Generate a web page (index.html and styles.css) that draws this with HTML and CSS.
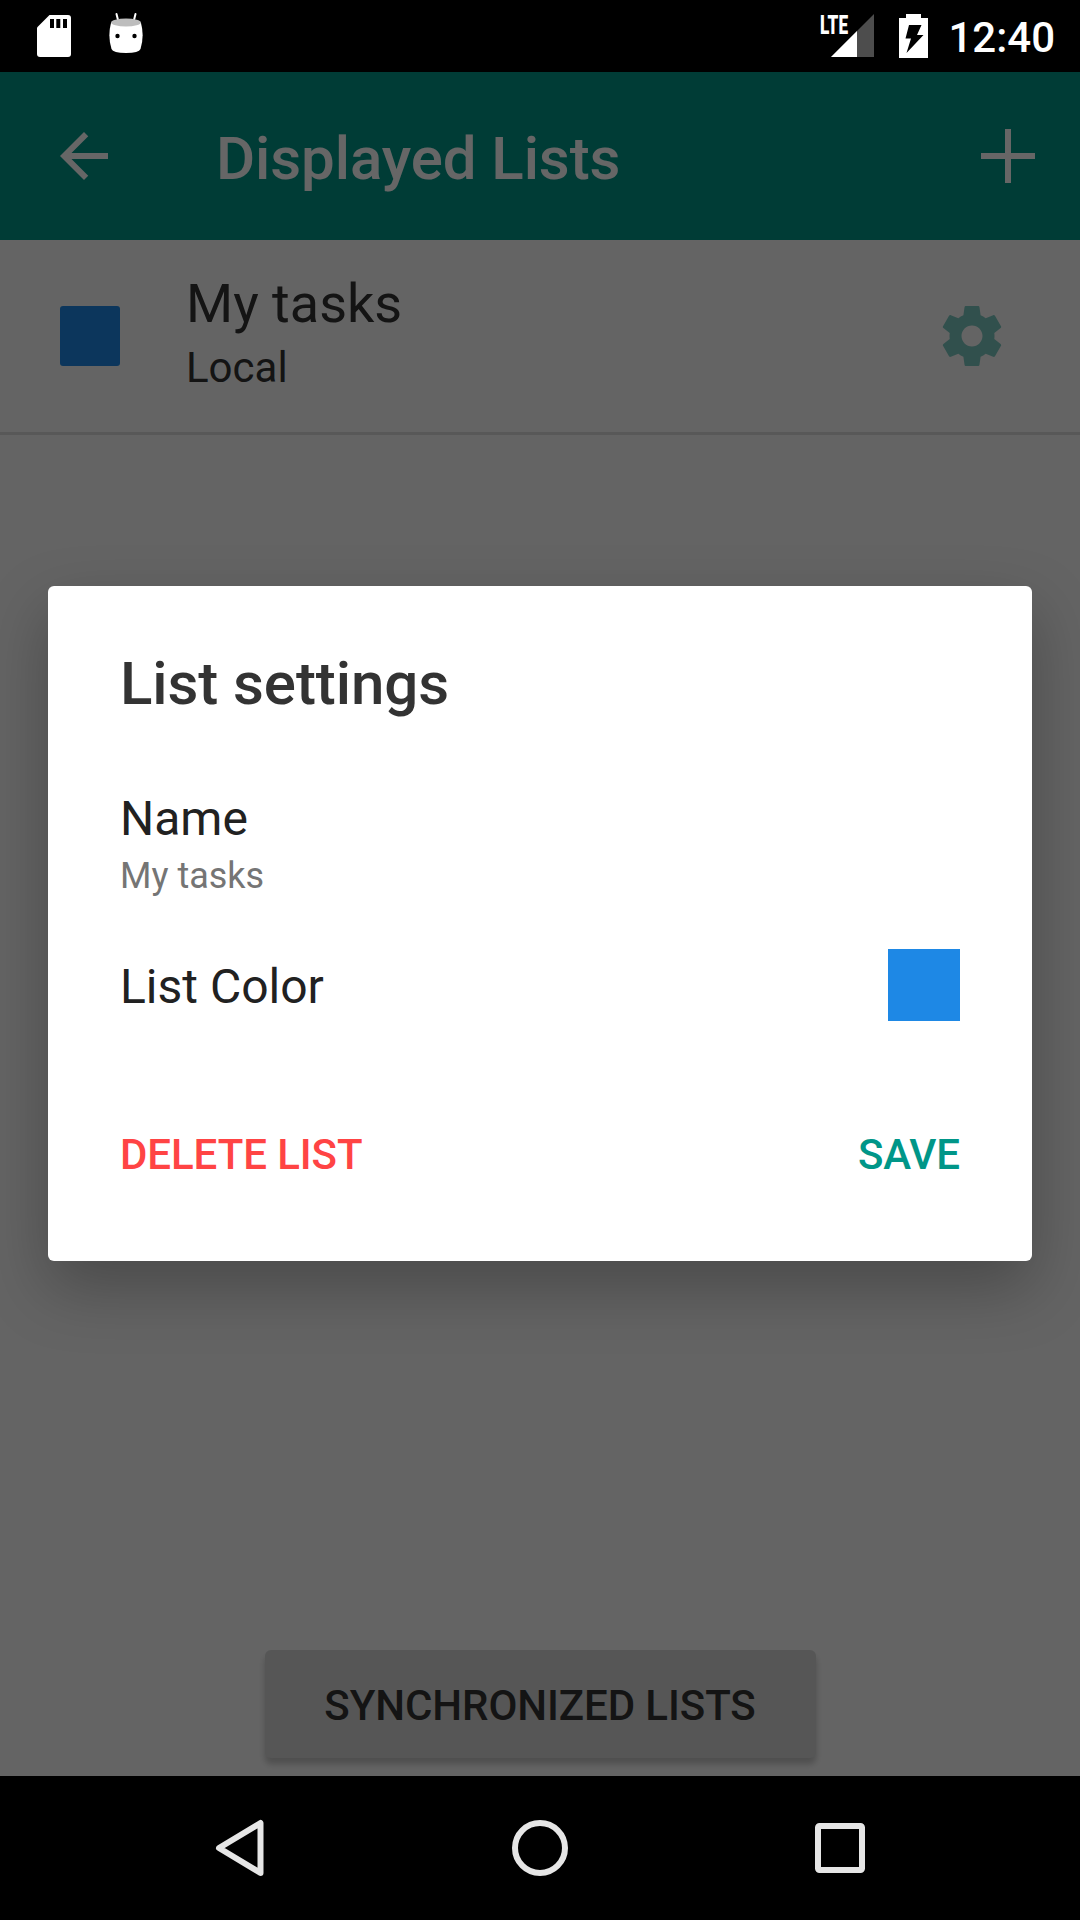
FILE: index.html
```html
<!DOCTYPE html>
<html lang="en">
<head>
<meta charset="utf-8">
<title>Displayed Lists</title>
<link rel="stylesheet" href="styles.css">
</head>
<body>
<div class="screen">
  <header class="status-bar">
    <div class="status-left">
      <svg width="34" height="42" viewBox="0 0 34 42">
        <path fill="#fff" d="M12.500 0H31a3 3 0 0 1 3 3V39a3 3 0 0 1-3 3H3a3 3 0 0 1-3-3V12.500z"/>
        <path fill="#000" d="M13 4h4v9h-4zM19.300 4h4v9h-4zM26 4h4v9h-4z"/>
      </svg>
      <svg width="34" height="42" viewBox="0 0 34 42">
        <path stroke="#fff" stroke-width="2" stroke-linecap="round" d="M7.500 2l2 8M26.500 2l-2 8"/>
        <path fill="#fff" d="M2 11Q17 6 32 11Q35.500 24 31.500 37Q30 41 17 41Q4 41 2.500 37Q-1.500 24 2 11z"/>
        <ellipse fill="#bdbdbd" cx="17" cy="10.500" rx="15" ry="4"/>
        <circle cx="8.500" cy="24" r="2.200"/><circle cx="25.500" cy="24" r="2.200"/>
      </svg>
    </div>
    <div class="status-right">
      <svg class="signal" width="62" height="58" viewBox="-8 -14 62 58">
        <path fill="#4d4d4d" d="M11 43L54 43V0z"/>
        <path fill="#fff" d="M11 43H37V17z"/>
        <text class="lte" x="0" y="19.500" textLength="28" lengthAdjust="spacingAndGlyphs">LTE</text>
      </svg>
      <svg class="battery" width="29" height="44" viewBox="0 0 29 44">
        <path fill="#fff" d="M7 0H22V4H29V44H0V4H7z"/>
        <path fill="#000" d="M10 11H22.500L18 21H24.500L7.500 39L12 24.500H6.500z"/>
      </svg>
      <span class="clock">12:40</span>
    </div>
  </header>

  <main class="app">
    <div class="app-bar">
      <svg width="72" height="72" viewBox="0 0 24 24"><path fill="#fff" d="M20 11H7.830l5.590-5.590L12 4l-8 8 8 8 1.410-1.410L7.830 13H20v-2z"/></svg>
      <h1 class="app-title">Displayed Lists</h1>
      <svg width="54" height="54" viewBox="0 0 54 54"><path fill="#fff" d="M24 0h6v24h24v6H30v24h-6V30H0v-6h24z"/></svg>
    </div>
    <div class="list-row">
      <span class="list-swatch"></span>
      <div class="list-text">
        <span class="list-name">My tasks</span>
        <span class="list-account">Local</span>
      </div>
      <svg class="gear" width="72" height="72" viewBox="0 0 24 24"><path fill="#009688" d="M19.430 12.980c.04-.32.07-.64.07-.98s-.03-.66-.07-.98l2.110-1.650c.19-.15.24-.42.12-.64l-2-3.460c-.12-.22-.39-.3-.61-.22l-2.490 1c-.52-.4-1.080-.73-1.690-.98l-.38-2.650C14.460 2.180 14.250 2 14 2h-4c-.25 0-.46.18-.49.42l-.38 2.650c-.61.25-1.170.59-1.690.98l-2.490-1c-.23-.09-.49 0-.61.22l-2 3.460c-.13.22-.07.49.12.64l2.110 1.650c-.04.32-.07.65-.07.98s.03.66.07.98l-2.110 1.650c-.19.15-.24.42-.12.64l2 3.460c.12.22.39.3.61.22l2.490-1c.52.4 1.080.73 1.690.98l.38 2.650c.03.24.24.42.49.42h4c.25 0 .46-.18.49-.42l.38-2.650c.61-.25 1.170-.59 1.690-.98l2.490 1c.23.09.49 0 .61-.22l2-3.460c.12-.22.07-.49-.12-.64l-2.110-1.650zM12 15.500c-1.930 0-3.500-1.570-3.500-3.500s1.570-3.500 3.500-3.500 3.500 1.570 3.500 3.500-1.570 3.500-3.500 3.500z"/></svg>
    </div>
    <button class="sync-button">SYNCHRONIZED LISTS</button>

    <div class="scrim">
      <section class="dialog">
        <h2 class="dialog-title">List settings</h2>
        <div class="setting">
          <span class="setting-label">Name</span>
          <span class="setting-value">My tasks</span>
        </div>
        <div class="setting-color">
          <span class="setting-label">List Color</span>
          <span class="color-swatch"></span>
        </div>
        <div class="dialog-actions">
          <button class="action action-delete">DELETE LIST</button>
          <button class="action action-save">SAVE</button>
        </div>
      </section>
    </div>
  </main>

  <nav class="nav-bar">
    <svg width="60" height="60" viewBox="0 0 60 60"><path d="M9 30L50.500 5V55z"/></svg>
    <svg width="60" height="60" viewBox="0 0 60 60"><circle cx="30" cy="30" r="25"/></svg>
    <svg width="60" height="60" viewBox="0 0 60 60"><rect x="8" y="8" width="44" height="44" rx="1.500"/></svg>
  </nav>
</div>
</body>
</html>
```
FILE: styles.css
```css
* {
  box-sizing: border-box;
}

body {
  margin: 0;
  background: #000;
  font-family: Roboto, "Liberation Sans", sans-serif;
}

h1, h2 {
  margin: 0;
  font-weight: 500;
  letter-spacing: -0.08px;
}

button {
  margin: 0;
  padding: 0;
  border: 0;
  background: none;
  font: 500 42px/50px Roboto, "Liberation Sans", sans-serif;
  letter-spacing: -0.08px;
}

svg {
  display: block;
  flex: none;
}

.screen {
  display: flex;
  flex-direction: column;
  width: 1080px;
  height: 1920px;
  overflow: hidden;
}

/* Status bar */
.status-bar {
  display: flex;
  justify-content: space-between;
  flex: none;
  height: 72px;
  padding: 0 25px 0 37px;
  background: #000;
}

.status-left {
  display: flex;
  gap: 38px;
  padding-top: 15px;
}

.status-left svg + svg {
  margin-top: -3px;
}

.status-right {
  display: flex;
}

.battery {
  margin: 14px 0 0 25px;
}

.lte {
  fill: #fff;
  font-size: 26px;
  font-weight: 900;
}

.clock {
  margin: 14px 0 0 20px;
  color: #fff;
  font-size: 42px;
  font-weight: 500;
  line-height: 48px;
}

/* Page behind the dialog */
.app {
  position: relative;
  display: flex;
  flex: 1;
  flex-direction: column;
  background: #fafafa;
}

.app-bar {
  display: flex;
  align-items: center;
  height: 168px;
  padding: 0 45px 0 48px;
  background: #009688;
}

.app-title {
  flex: 1;
  padding: 5px 0 0 96px;
  color: #fff;
  font-size: 60px;
  line-height: 70px;
}

.list-row {
  display: flex;
  align-items: center;
  height: 195px;
  padding: 0 72px 0 60px;
  border-bottom: 3px solid #dcdcdc;
}

.list-swatch {
  width: 60px;
  height: 60px;
  border-radius: 3px;
  background: #1e88e5;
}

.list-text {
  display: flex;
  flex: 1;
  flex-direction: column;
  padding: 0 0 8px 66px;
  color: #333;
}

.list-name {
  font-size: 54px;
  line-height: 72px;
}

.list-account {
  font-size: 42px;
  line-height: 56px;
}

.gear {
  opacity: 0.5;
}

.sync-button {
  align-self: center;
  width: 551px;
  height: 108px;
  margin: auto 0 18px;
  border-radius: 6px;
  background: #d6d7d7;
  box-shadow: 0 6px 6px rgba(0, 0, 0, 0.22);
  color: #333;
  line-height: 111px;
}

/* Dialog */
.scrim {
  position: absolute;
  inset: 0;
  padding: 514px 48px 0;
  background: rgba(0, 0, 0, 0.6);
}

.dialog {
  padding: 62px 72px 81px;
  border-radius: 6px;
  background: #fff;
  box-shadow: 0 26px 64px rgba(0, 0, 0, 0.27);
}

.dialog-title {
  color: #333;
  font-size: 60px;
  line-height: 71px;
}

.setting {
  display: flex;
  flex-direction: column;
  gap: 8px;
  margin-top: 72px;
}

.setting-label {
  color: #212121;
  font-size: 48px;
  line-height: 56px;
}

.setting-value {
  color: #757575;
  font-size: 36px;
  line-height: 42px;
}

.setting-color {
  display: flex;
  align-items: center;
  justify-content: space-between;
  height: 72px;
  margin-top: 52px;
}

.setting-color .setting-label {
  padding-top: 3px;
}

.color-swatch {
  width: 72px;
  height: 72px;
  background: #1e88e5;
}

.dialog-actions {
  display: flex;
  justify-content: space-between;
  margin-top: 109px;
}

.action-delete {
  color: #ff4444;
}

.action-save {
  color: #009688;
}

/* System navigation */
.nav-bar {
  display: flex;
  align-items: center;
  justify-content: center;
  gap: 240px;
  flex: none;
  height: 144px;
  background: #000;
}

.nav-bar svg {
  fill: none;
  stroke: #e6e6e6;
  stroke-width: 6;
  stroke-linejoin: round;
}
```
